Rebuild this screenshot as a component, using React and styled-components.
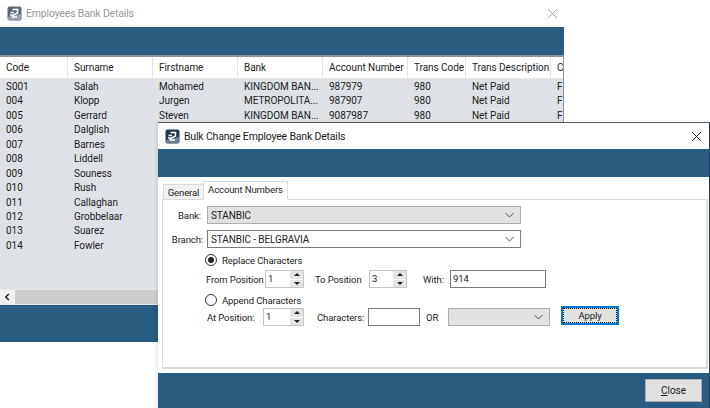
import styled, { createGlobalStyle } from 'styled-components';

const employees = [
  ['S001', 'Salah', 'Mohamed', 'KINGDOM BAN...', '987979', '980', 'Net Paid', 'F'],
  ['004', 'Klopp', 'Jurgen', 'METROPOLITA...', '987907', '980', 'Net Paid', 'F'],
  ['005', 'Gerrard', 'Steven', 'KINGDOM BAN...', '9087987', '980', 'Net Paid', 'F'],
  ['006', 'Dalglish'],
  ['007', 'Barnes'],
  ['008', 'Liddell'],
  ['009', 'Souness'],
  ['010', 'Rush'],
  ['011', 'Callaghan'],
  ['012', 'Grobbelaar'],
  ['013', 'Suarez'],
  ['014', 'Fowler'],
];

const columns = ['Code', 'Surname', 'Firstname', 'Bank', 'Account Number', 'Trans Code', 'Trans Description', 'C'];

const GlobalStyle = createGlobalStyle`
  html, body {
    margin: 0;
    padding: 0;
    background: #ffffff;
  }
  body {
    font-family: Roboto, "Liberation Sans", Arial, sans-serif;
    font-size: 10px;
    letter-spacing: -0.05px;
    color: #222222;
  }
`;

const Desktop = styled.div`
  position: relative;
  width: 710px;
  height: 408px;
  overflow: hidden;
  background: #ffffff;
`;

const BackWindow = styled.div`
  position: absolute;
  left: 0;
  top: 0;
  width: 564px;
  height: 342px;
  display: flex;
  flex-direction: column;
  background: #ffffff;
`;

const FrontWindow = styled.div`
  position: absolute;
  left: 158px;
  top: 122px;
  width: 552px;
  height: 286px;
  box-sizing: border-box;
  display: flex;
  flex-direction: column;
  background: #ffffff;
  border-top: 1px solid #56595c;
  border-right: 1px solid #2b3f50;
  box-shadow: -2px 0 3px rgba(0, 0, 0, 0.08);
`;

const TitleBar = styled.div`
  height: ${({ $height }) => $height}px;
  flex: none;
  display: flex;
  align-items: center;
  padding: 0 7px;
  font-size: 10.5px;
  letter-spacing: -0.18px;
  color: ${({ $dim }) => ($dim ? '#9a9a9a' : '#1c1c1c')};
`;

const TitleText = styled.span`
  margin-left: 4px;
  flex: 1;
`;

const CloseGlyph = styled.svg`
  width: 11px;
  height: 11px;
  margin-right: ${({ $right }) => $right}px;
  stroke: ${({ $dim }) => ($dim ? '#a8a8a8' : '#222222')};
  stroke-width: 1;
  fill: none;
`;

const BlueBand = styled.div`
  height: ${({ $height }) => $height}px;
  flex: none;
  background: #2a5b80;
`;

const GridFrame = styled.div`
  flex: 1;
  min-height: 0;
  display: flex;
  flex-direction: column;
  border-top: 2px solid #87929b;
  border-right: 1px solid #87929b;
  background: #dee2e6;
  overflow: hidden;
`;

const GridRow = styled.div`
  display: grid;
  grid-template-columns: 68px 85px 85px 85px 85px 58px 85px 20px;
  height: ${({ $header }) => ($header ? '21px' : '14.45px')};
  flex: none;
  background: ${({ $header }) => ($header ? '#ffffff' : 'transparent')};
  border-bottom: ${({ $header }) => ($header ? '1px solid #e8e8e8' : 'none')};
`;

const GridCell = styled.div`
  padding-left: 6px;
  white-space: nowrap;
  overflow: hidden;
  line-height: ${({ $header }) => ($header ? '22px' : '14.45px')};
  border-right: ${({ $header }) => ($header ? '1px solid #e4e4e4' : 'none')};
`;

const GridBody = styled.div`
  flex: 1;
  padding-top: 1px;
`;

const ScrollBar = styled.div`
  height: 14px;
  flex: none;
  display: flex;
  align-items: stretch;
  background: #cdcdcd;
  border-top: 1px solid #e6e6e6;
  border-bottom: 1px solid #e6e6e6;
`;

const ScrollArrow = styled.div`
  width: 15px;
  display: flex;
  align-items: center;
  justify-content: center;
  background: #f0f0f0;
`;

const Content = styled.div`
  flex: 1;
  min-height: 0;
  padding: 5px 1px 4px 4px;
  display: flex;
  flex-direction: column;
  font-size: 9.5px;
  letter-spacing: -0.1px;
`;

const TabStrip = styled.div`
  height: 18px;
  flex: none;
  display: flex;
  align-items: flex-end;
  padding-left: 1px;
  position: relative;
  z-index: 1;
  margin-bottom: -1px;
`;

const Tab = styled.div`
  box-sizing: border-box;
  height: ${({ $active }) => ($active ? '19px' : '16px')};
  width: ${({ $active }) => ($active ? '85px' : '40px')};
  padding-bottom: ${({ $active }) => ($active ? '2px' : '0')};
  display: flex;
  align-items: center;
  justify-content: center;
  white-space: nowrap;
  background: ${({ $active }) => ($active ? '#ffffff' : '#f2f2f2')};
  border: 1px solid #d9d9d9;
  border-bottom: ${({ $active }) => ($active ? '1px solid #ffffff' : '1px solid #d9d9d9')};
  border-right: ${({ $active }) => ($active ? '1px solid #d9d9d9' : 'none')};
`;

const Panel = styled.div`
  flex: 1;
  min-height: 0;
  border: 1px solid #dcdcdc;
  border-bottom-width: 2px;
  border-right-width: 2px;
  padding: 6px 0 0 0;
  display: flex;
  flex-direction: column;
`;

const FormRow = styled.div`
  display: flex;
  align-items: center;
  height: ${({ $height }) => $height}px;
  margin-top: ${({ $top }) => $top || 0}px;
  padding-left: ${({ $indent }) => $indent || 0}px;
`;

const Label = styled.span`
  flex: none;
  white-space: nowrap;
  box-sizing: border-box;
  width: ${({ $width }) => ($width ? `${$width}px` : 'auto')};
  text-align: ${({ $right }) => ($right ? 'right' : 'left')};
  margin-left: ${({ $left }) => $left || 0}px;
`;

const Combo = styled.div`
  box-sizing: border-box;
  width: ${({ $width }) => $width}px;
  height: 18px;
  margin-left: ${({ $left }) => $left || 0}px;
  flex: none;
  display: flex;
  align-items: center;
  justify-content: space-between;
  padding: 0 6px 0 3px;
  font-size: 10px;
  background: ${({ $disabled }) => ($disabled ? '#e1e1e1' : '#ffffff')};
  border: 1px solid ${({ $disabled }) => ($disabled ? '#adadad' : '#7a7a7a')};
`;

const Chevron = styled.svg`
  width: 9px;
  height: 6px;
  fill: none;
  stroke: #555555;
  stroke-width: 1;
`;

const TextBox = styled.div`
  box-sizing: border-box;
  flex: none;
  width: ${({ $width }) => $width}px;
  height: 18px;
  margin-left: ${({ $left }) => $left || 0}px;
  padding-left: 2px;
  line-height: 16px;
  background: #ffffff;
  border: 1px solid #7a7a7a;
`;

const Spinner = styled.div`
  box-sizing: border-box;
  flex: none;
  width: ${({ $width }) => $width}px;
  height: 18px;
  margin-left: ${({ $left }) => $left || 0}px;
  display: flex;
  align-items: stretch;
  border: 1px solid #c4c4c4;
  background: #ffffff;
`;

const SpinValue = styled.div`
  flex: 1;
  padding-left: 2px;
  line-height: 16px;
`;

const SpinButtons = styled.div`
  width: 13px;
  display: flex;
  flex-direction: column;
  gap: 1px;
  background: #ffffff;
`;

const SpinButton = styled.div`
  flex: 1;
  display: flex;
  align-items: center;
  justify-content: center;
  background: #e4e4e4;
`;

const Arrow = styled.span`
  width: 0;
  height: 0;
  border-left: 3px solid transparent;
  border-right: 3px solid transparent;
  border-bottom: ${({ $down }) => ($down ? 'none' : '3px solid #222222')};
  border-top: ${({ $down }) => ($down ? '3px solid #222222' : 'none')};
`;

const Radio = styled.span`
  box-sizing: border-box;
  width: 12px;
  height: 12px;
  flex: none;
  margin-right: 5px;
  border-radius: 50%;
  border: 1px solid #333333;
  display: flex;
  align-items: center;
  justify-content: center;
  &::after {
    content: '';
    display: ${({ $checked }) => ($checked ? 'block' : 'none')};
    width: 6px;
    height: 6px;
    border-radius: 50%;
    background: #222222;
  }
`;

const ApplyButton = styled.button`
  box-sizing: border-box;
  flex: none;
  width: 58px;
  height: 19px;
  margin-left: 11px;
  margin-top: -3px;
  padding: 0;
  font: inherit;
  letter-spacing: inherit;
  color: #222222;
  background: #e1e1e1;
  border: 2px solid #0078d7;
  outline: 1px dotted #111111;
  outline-offset: -3px;
`;

const Footer = styled.div`
  height: 35px;
  flex: none;
  box-sizing: border-box;
  background: #2a5b80;
  display: flex;
  justify-content: flex-end;
  padding: 6px 7px 0 0;
`;

const CloseButton = styled.button`
  box-sizing: border-box;
  width: 57px;
  height: 23px;
  padding: 0;
  font: inherit;
  color: #222222;
  background: #e1e1e1;
  border: 1px solid #adadad;
  & u {
    text-decoration: underline;
  }
`;

function AppIcon({ dim }) {
  return (
    <svg width="15" height="15" viewBox="0 0 15 15" style={{ flex: 'none', opacity: dim ? 0.75 : 1 }}>
      <rect x="0.5" y="0.5" width="14" height="14" rx="2" fill="#24384e" />
      <path d="M1 11 L14 8 V13 Q14 14 13 14 H2 Q1 14 1 13 Z" fill="#6f7f90" />
      <path d="M5.5 3.5 H10.5 V7 L5.5 9.5 V11 H10 M3.5 6.5 H7 M3 9 H5" fill="none" stroke="#ffffff" strokeWidth="1.5" />
    </svg>
  );
}

function CloseIcon({ dim, right }) {
  return (
    <CloseGlyph viewBox="0 0 11 11" $dim={dim} $right={right}>
      <path d="M1 1 L10 10 M10 1 L1 10" />
    </CloseGlyph>
  );
}

function ComboBox({ value, width, left, disabled }) {
  return (
    <Combo $width={width} $left={left} $disabled={disabled}>
      <span>{value}</span>
      <Chevron viewBox="0 0 9 6">
        <path d="M0.5 1 L4.5 5 L8.5 1" />
      </Chevron>
    </Combo>
  );
}

function SpinBox({ value, width, left }) {
  return (
    <Spinner $width={width} $left={left}>
      <SpinValue>{value}</SpinValue>
      <SpinButtons>
        <SpinButton>
          <Arrow />
        </SpinButton>
        <SpinButton>
          <Arrow $down />
        </SpinButton>
      </SpinButtons>
    </Spinner>
  );
}

export default function App() {
  return (
    <Desktop>
      <GlobalStyle />
      <BackWindow>
        <TitleBar $height={27} $dim>
          <AppIcon dim />
          <TitleText>Employees Bank Details</TitleText>
          <CloseIcon dim right={-1} />
        </TitleBar>
        <BlueBand $height={28} />
        <GridFrame>
          <GridRow $header>
            {columns.map((col) => (
              <GridCell key={col} $header>
                {col}
              </GridCell>
            ))}
          </GridRow>
          <GridBody>
            {employees.map((row) => (
              <GridRow key={row[0]}>
                {row.map((cell, i) => (
                  <GridCell key={i}>{cell}</GridCell>
                ))}
              </GridRow>
            ))}
          </GridBody>
          <ScrollBar>
            <ScrollArrow>
              <Chevron viewBox="0 0 9 9" style={{ height: 8, stroke: '#222', strokeWidth: 1.6 }}>
                <path d="M6 1 L2.5 4.5 L6 8" />
              </Chevron>
            </ScrollArrow>
          </ScrollBar>
          <BlueBand $height={37} />
        </GridFrame>
      </BackWindow>

      <FrontWindow>
        <TitleBar $height={26}>
          <AppIcon />
          <TitleText>Bulk Change Employee Bank Details</TitleText>
          <CloseIcon right={0} />
        </TitleBar>
        <BlueBand $height={28} />
        <Content>
          <TabStrip>
            <Tab>General</Tab>
            <Tab $active>Account Numbers</Tab>
          </TabStrip>
          <Panel>
            <FormRow $height={18}>
              <Label $width={38} $right>
                Bank:
              </Label>
              <ComboBox value="STANBIC" width={314} left={6} disabled />
            </FormRow>
            <FormRow $height={18} $top={6}>
              <Label $width={40} $right>
                Branch:
              </Label>
              <ComboBox value="STANBIC - BELGRAVIA" width={314} left={4} />
            </FormRow>
            <FormRow $height={14} $top={5} $indent={42}>
              <Radio $checked />
              Replace Characters
            </FormRow>
            <FormRow $height={18} $top={3} $indent={43}>
              <Label $width={59}>From Position</Label>
              <SpinBox value="1" width={39} />
              <Label $width={54} $left={11}>
                To Position
              </Label>
              <SpinBox value="3" width={38} />
              <Label $width={27} $left={16}>
                With:
              </Label>
              <TextBox $width={96}>914</TextBox>
            </FormRow>
            <FormRow $height={14} $top={5} $indent={42}>
              <Radio />
              Append Characters
            </FormRow>
            <FormRow $height={18} $top={1} $indent={44}>
              <Label $width={56}>At Position:</Label>
              <SpinBox value="1" width={41} />
              <Label $width={51} $left={13}>
                Characters:
              </Label>
              <TextBox $width={52} />
              <Label $width={22} $left={6}>
                OR
              </Label>
              <ComboBox value="" width={102} disabled />
              <ApplyButton>Apply</ApplyButton>
            </FormRow>
          </Panel>
        </Content>
        <Footer>
          <CloseButton>
            <u>C</u>lose
          </CloseButton>
        </Footer>
      </FrontWindow>
    </Desktop>
  );
}
